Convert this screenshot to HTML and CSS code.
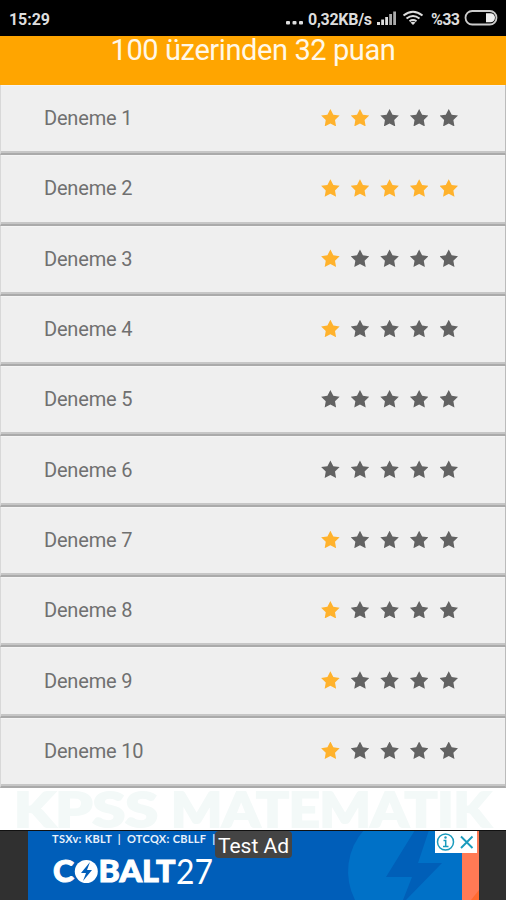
FILE: index.html
```html
<!DOCTYPE html>
<html lang="tr">
<head>
<meta charset="utf-8">
<title>KPSS Matematik</title>
<link rel="stylesheet" href="styles.css">
</head>
<body>
<div class="screen">
  <header class="status">
    <svg width="506" height="36" viewBox="0 0 506 36">
      <text class="st" x="9" y="24.5" textLength="41">15:29</text>
      <g fill="#ddd"><rect x="286" y="21" width="4" height="3.5" rx="1"/><rect x="292.500" y="21" width="4" height="3.5" rx="1"/><rect x="299" y="21" width="4" height="3.5" rx="1"/></g>
      <text class="st" x="308" y="24.500" textLength="64">0,32KB/s</text>
      <g fill="#ddd"><rect x="377" y="22" width="3" height="3"/><rect x="381.200" y="19.500" width="2.800" height="5.500"/><rect x="385.200" y="17" width="2.800" height="8"/></g>
      <g fill="#aaa"><rect x="389.200" y="14" width="2.800" height="11"/><rect x="393.200" y="11.500" width="2.800" height="13.500"/></g>
      <g fill="none" stroke="#ddd" stroke-width="2"><path d="M403.500 15.500q9.500-7.500 19 0M406.500 18.500q6.500-5 13 0M409.500 21.300q3.500-2.500 7 0"/></g>
      <path d="M410.500 22.500q2.500-1.500 5 0L413 25z" fill="#ddd"/>
      <text class="st" x="431" y="24.500" textLength="29">%33</text>
      <rect x="465.500" y="11" width="31" height="13.500" rx="6.700" fill="none" stroke="#ccc" stroke-width="1.800"/>
      <path d="M486 13.200h4.500a4.500 4.500 0 0 1 0 9H486z" fill="#eee"/>
    </svg>
  </header>
  <div class="score"><span>100 üzerinden 32 puan</span></div>
  <main class="body">
    <ul class="list">
      <li><span class="name">Deneme 1</span><span class="stars"><i class="on"></i><i class="on"></i><i></i><i></i><i></i></span></li>
      <li><span class="name">Deneme 2</span><span class="stars"><i class="on"></i><i class="on"></i><i class="on"></i><i class="on"></i><i class="on"></i></span></li>
      <li><span class="name">Deneme 3</span><span class="stars"><i class="on"></i><i></i><i></i><i></i><i></i></span></li>
      <li><span class="name">Deneme 4</span><span class="stars"><i class="on"></i><i></i><i></i><i></i><i></i></span></li>
      <li><span class="name">Deneme 5</span><span class="stars"><i></i><i></i><i></i><i></i><i></i></span></li>
      <li><span class="name">Deneme 6</span><span class="stars"><i></i><i></i><i></i><i></i><i></i></span></li>
      <li><span class="name">Deneme 7</span><span class="stars"><i class="on"></i><i></i><i></i><i></i><i></i></span></li>
      <li><span class="name">Deneme 8</span><span class="stars"><i class="on"></i><i></i><i></i><i></i><i></i></span></li>
      <li><span class="name">Deneme 9</span><span class="stars"><i class="on"></i><i></i><i></i><i></i><i></i></span></li>
      <li><span class="name">Deneme 10</span><span class="stars"><i class="on"></i><i></i><i></i><i></i><i></i></span></li>
    </ul>
    <svg class="brand" width="506" height="42" viewBox="0 0 506 42">
      <text x="14" y="39" textLength="144" lengthAdjust="spacingAndGlyphs">KPSS</text>
      <text x="171" y="39" textLength="320" lengthAdjust="spacingAndGlyphs">MATEMATIK</text>
    </svg>
  </main>
  <footer class="ad">
    <svg width="506" height="70" viewBox="0 0 506 70">
      <rect width="506" height="70" fill="#303030"/>
      <rect x="28" width="434" height="70" fill="#005eb9"/>
      <path d="M364 0h98v70H355a62 62 0 0 1 9-70z" fill="#0071c7"/>
      <path d="M415 0h14l-11 33h24l-36 37h-3l9-23h-26z" fill="#005fb8"/>
      <rect x="462" width="17" height="70" fill="#ff7a55"/>
      <path d="M479 60v10h-8z" fill="#ff6a30"/>
      <rect width="506" height="1" fill="#111"/>
      <text class="tick" x="52" y="12.500" textLength="163" xml:space="preserve">TSXv: KBLT  |  OTCQX: CBLLF  |</text>
      <text class="logo" x="53" y="52" textLength="21" lengthAdjust="spacingAndGlyphs">C</text>
      <circle cx="86.300" cy="41.500" r="11.500" fill="#fff"/>
      <path d="M90 32l-9 11h5l-3 8 9-11h-5z" fill="#005eb9"/>
      <text class="logo" x="98.500" y="52" textLength="77" lengthAdjust="spacingAndGlyphs">BALT</text>
      <text class="num" x="176" y="54" textLength="37" lengthAdjust="spacingAndGlyphs">27</text>
      <rect x="215" y="1" width="77" height="27" rx="4" fill="#444"/>
      <text class="test" x="218" y="22.500" textLength="71">Test Ad</text>
      <rect x="435" y="1" width="42" height="22" fill="#fff"/>
      <g fill="none" stroke="#1a9bbd" stroke-width="1.500"><circle cx="445.500" cy="12" r="8"/><path d="M461 6.500l11.500 11.500M472.500 6.500L461 18" stroke-width="1.900"/><path d="M443.500 10.500h2.200v6M443 16.500h5.500"/></g>
      <circle cx="445.500" cy="7.500" r="1.200" fill="#1a9bbd"/>
    </svg>
  </footer>
</div>
</body>
</html>
```
FILE: styles.css
```css
body { margin: 0; font-family: Roboto, "Liberation Sans", sans-serif; }
.screen { width: 506px; height: 900px; display: flex; flex-direction: column; overflow: hidden; background: #fff; }
svg { display: block; }
.status { height: 36px; background: #000; }
.st { font-size: 16px; font-weight: 700; fill: #ddd; }
.score { height: 49px; flex: none; background: #ffa500; color: #fff8e8; text-align: center; font-size: 29px; line-height: 28px; letter-spacing: -0.4px; }
.body { height: 745px; flex: none; display: flex; flex-direction: column; }
.list { list-style: none; margin: 0; padding: 0; }
.list li {
  display: flex; align-items: center; justify-content: space-between;
  box-sizing: border-box; height: 70.3px; padding: 0 47px 2px 43px;
  background: #efefef;
  border-left: 1px solid #d8d8d8; border-right: 1px solid #bbb;
  border-bottom: 2px solid #aaa;
  box-shadow: inset 0 -2px #c6c6c6, inset 0 1px #f5f5f5;
}
.name { font-size: 20px; line-height: 24px; color: #707070; letter-spacing: -0.18px; }
.stars { display: flex; gap: 11.1px; margin-bottom: 1px; }
.stars i {
  width: 18.5px; height: 17.5px; background: #626262;
  clip-path: polygon(50% 83%, 80.9% 100%, 75% 64%, 100% 38.1%, 66% 33%, 50% 0, 34% 33%, 0 38.1%, 25% 64%, 19.1% 100%);
}
.stars .on { background: #ffb22c; }
.brand text { font: 900 47px Lato, sans-serif; fill: #f3f9f8; stroke: #f3f9f8; stroke-width: 2; }
.ad { height: 70px; flex: none; }
.tick { font: 700 11px Lato, sans-serif; fill: #e8f1fb; white-space: pre; }
.logo { font: 900 31px Lato, sans-serif; fill: #fff; stroke: #fff; stroke-width: 1; }
.num { font: 400 34px Lato, sans-serif; fill: #fff; }
.test { font-size: 21px; fill: #fff; }
```
